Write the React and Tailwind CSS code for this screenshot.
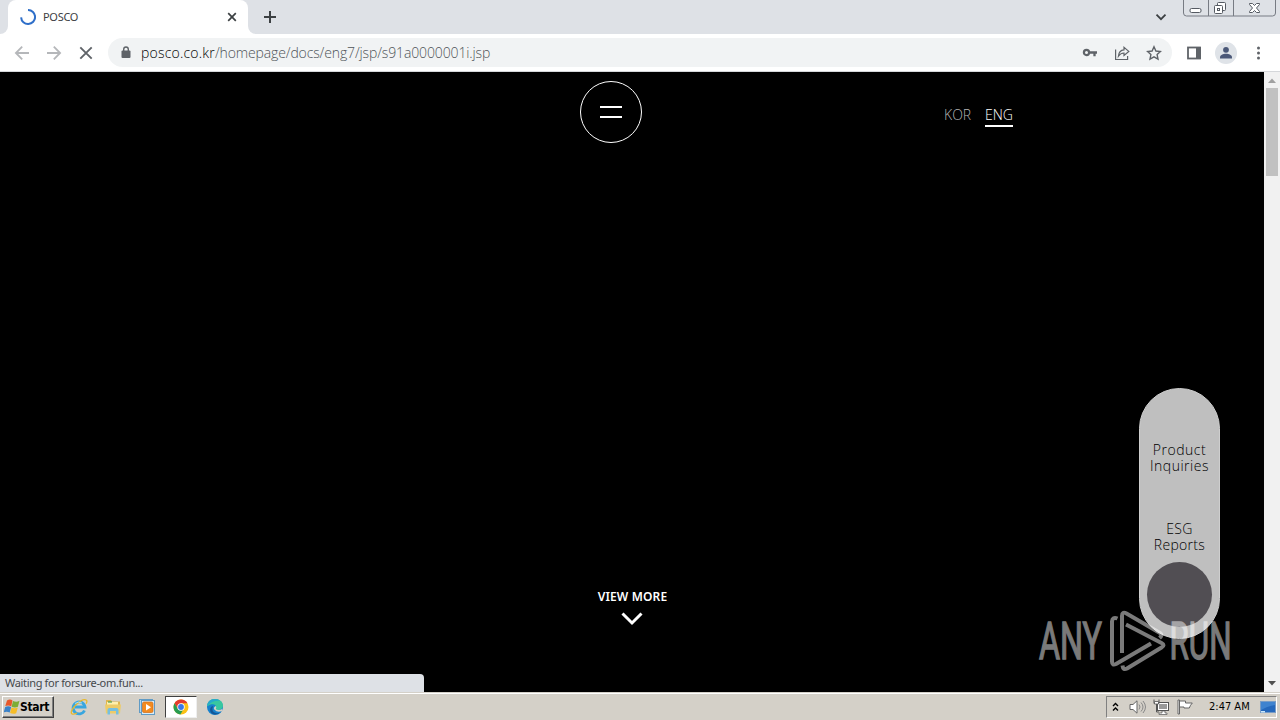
import React from "react";

function TabStrip() {
  return (
    <div className="flex h-[34px] w-full items-start bg-[#dee1e6]">
      <div className="flex h-[34px] w-2 items-end bg-white">
        <div className="h-full w-2 rounded-br-lg bg-[#dee1e6]" />
      </div>
      <div className="flex h-[34px] w-60 items-center rounded-t-lg bg-white pr-2.5 pl-3">
        <svg className="size-4 shrink-0" viewBox="0 0 16 16" fill="none">
          <path d="M8 1A7 7 0 1 1 1.1 8.400" stroke="#2f6fc9" strokeWidth="2" />
        </svg>
        <span className="ml-[7px] flex-1 text-[11px] tracking-[-0.3px] text-[#3c4043]">POSCO</span>
        <svg className="size-3" viewBox="0 0 12 12" stroke="#3c4043" strokeWidth="1.7">
          <path d="M2.2 2.2l7.6 7.6M9.8 2.2L2.2 9.8" />
        </svg>
      </div>
      <div className="h-[34px] w-2 bg-white">
        <div className="h-full w-2 rounded-bl-lg bg-[#dee1e6]" />
      </div>
      <svg className="mt-[10px] ml-[7px] size-[14px]" viewBox="0 0 14 14" stroke="#3c4043" strokeWidth="2">
        <path d="M7 1v12M1 7h12" />
      </svg>
      <svg className="mt-[11px] ml-auto size-3" viewBox="0 0 12 12" fill="none" stroke="#3c4043" strokeWidth="1.8">
        <path d="M1.5 3.7L6 8.2l4.5-4.5" />
      </svg>
      <svg className="ml-4 h-[18px] w-[94px]" viewBox="0 0 94 18" fill="none" stroke="#777b83">
        <path d="M.5 0v13q0 3 3 3h86q3 0 3-3V0M25.5 0v16M50.500 0v16" />
        <rect x="7" y="8.500" width="11" height="4" rx="1.500" fill="#fff" stroke="#555a62" />
        <g stroke="#555a62" fill="#fff">
          <rect x="34.500" y="2.500" width="8" height="8" rx="1" />
          <rect x="31.500" y="5.500" width="8" height="8" rx="1" />
          <rect x="34.500" y="8.500" width="2" height="2" />
        </g>
        <path fill="#fff" stroke="#555a62" d="M66.500 3.500h3l2 2 2-2h3v1l-3 3.500 3 3.500v1h-3l-2-2-2 2h-3v-1l3-3.500-3-3.500z" />
      </svg>
      <div className="w-[3px]" />
    </div>
  );
}

function Toolbar() {
  return (
    <div className="flex h-[38px] w-full items-center border-b border-[#d5d7da] bg-white pl-[14px]">
      <div className="flex w-[94px] items-center gap-4">
        <svg className="size-4" viewBox="0 0 16 16" fill="none" stroke="#b5b7ba" strokeWidth="1.8">
          <path d="M15 8H2M8.200 1.700L1.900 8l6.300 6.300" />
        </svg>
        <svg className="size-4" viewBox="0 0 16 16" fill="none" stroke="#b5b7ba" strokeWidth="1.8">
          <path d="M1 8h13M7.800 1.700L14.100 8l-6.300 6.300" />
        </svg>
        <svg className="size-4" viewBox="0 0 16 16" fill="none" stroke="#5f6368" strokeWidth="1.900">
          <path d="M2.300 2.300l11.400 11.400M13.700 2.300L2.300 13.700" />
        </svg>
      </div>
      <div className="flex h-[29px] w-[1064px] items-center rounded-full bg-[#f1f3f4] pr-[10px] pl-[13px]">
        <svg className="h-[13px] w-[10px]" viewBox="0 0 10 13">
          <rect x="0.500" y="4.500" width="9" height="7.500" rx="1" fill="#5f6368" />
          <path d="M2.700 5V3.300a2.300 2.300 0 0 1 4.600 0V5" fill="none" stroke="#5f6368" strokeWidth="1.400" />
        </svg>
        <div className="ml-[10px] flex-1 text-[14px] leading-5 font-light tracking-[-0.13px] whitespace-nowrap text-[#4f5358] [font-family:'Open_Sans','Noto_Sans',sans-serif]">
          <span className="tracking-[0.2px] text-black">posco.co.kr</span>/homepage/docs/eng7/jsp/s91a0000001i.jsp
        </div>
        <div className="flex items-center gap-4">
          <svg className="size-4" viewBox="0 0 16 16" fill="none" stroke="#5f6368">
            <circle cx="4.500" cy="7.500" r="2.600" strokeWidth="2.200" />
            <path d="M7 7.500h8M12.500 7.500v3.700" strokeWidth="2.300" />
          </svg>
          <svg className="size-4" viewBox="0 0 16 16" fill="none" stroke="#5f6368" strokeWidth="1.200">
            <path d="M1.600 4.500v10h12V11" />
            <path d="M4.400 11.200C4.700 7.300 6.700 5.200 10 4.900V2.200l4.800 4.200L10 10.500V8C7.500 8.100 5.800 9.100 4.400 11.200z" />
          </svg>
          <svg className="size-4" viewBox="0 0 16 16" fill="none" stroke="#5f6368" strokeWidth="1.400">
            <path d="M8 1.800l1.900 4.200 4.500.5-3.300 3.100.9 4.500L8 11.800l-4 2.300.9-4.500L1.600 6.500l4.500-.5z" />
          </svg>
        </div>
      </div>
      <svg className="ml-[14px] size-4" viewBox="0 0 16 16">
        <rect x="2" y="2.500" width="12" height="11" fill="none" stroke="#5f6368" strokeWidth="1.800" />
        <rect x="10" y="2" width="5" height="12" fill="#5f6368" />
      </svg>
      <svg className="ml-[13px] size-[22px]" viewBox="0 0 22 22">
        <circle cx="11" cy="11" r="11" fill="#dfe3e8" />
        <circle cx="11" cy="7.800" r="2.900" fill="#4b5878" />
        <path d="M5 16.500v-1.300c0-2 3-3.400 6-3.400s6 1.400 6 3.400v1.300z" fill="#4b5878" />
      </svg>
      <svg className="ml-[18px] h-4 w-[7px]" viewBox="0 0 7 16" fill="#5f6368">
        <circle cx="3.500" cy="3" r="1.500" />
        <circle cx="3.500" cy="8" r="1.500" />
        <circle cx="3.500" cy="13" r="1.500" />
      </svg>
    </div>
  );
}

function Watermark() {
  return (
    <svg className="absolute top-[532px] left-[1034px] h-[72px] w-[202px]" viewBox="0 0 202 72">
      <g fill="#fff" stroke="#fff" strokeWidth="1.3" opacity="0.48" fontFamily="Roboto, 'Liberation Sans', sans-serif" fontSize="51">
        <text x="5" y="55" textLength="63" lengthAdjust="spacingAndGlyphs">ANY</text>
        <text x="135.500" y="55" textLength="62" lengthAdjust="spacingAndGlyphs">RUN</text>
      </g>
      <g fill="none" stroke="#fff" opacity="0.48" strokeWidth="4" strokeLinejoin="round">
        <path d="M83.500 14.500q-5-2-5.500 3v40q0 4.500 4 2.500l35-20.500" />
        <path d="M88 49V12q0-5 4.500-2.500L126 29q3 2-.5 5" />
        <path d="M92 20.500l35.500 18.500q4 2 0 4.500L93 64.500q-4 2-4.500-3" />
      </g>
    </svg>
  );
}

function PageView() {
  return (
    <div className="flex h-[620px] w-full">
      <main className="relative flex w-[1264px] flex-col items-center bg-black">
        <header className="mt-[9px] grid h-[62px] w-full grid-cols-[580px_62px_1fr]">
          <div />
          <button className="flex size-[62px] flex-col items-center justify-center gap-2 rounded-full border border-white">
            <span className="h-0.5 w-[22px] bg-white" />
            <span className="h-0.5 w-[22px] bg-white" />
          </button>
          <nav className="mt-6 ml-[302px] flex items-start gap-[13px] text-[14px] leading-[19px] font-light [font-family:'Open_Sans','Noto_Sans',sans-serif]">
            <span className="w-7 whitespace-nowrap text-[#b5b5b5]">KOR</span>
            <span className="h-[22px] w-7 border-b-2 border-white whitespace-nowrap text-white">ENG</span>
          </nav>
        </header>
        <div className="mt-auto mb-[66px] flex flex-col items-center text-white">
          <span className="ml-px text-[12px] leading-4 font-semibold tracking-[0.15px]">VIEW MORE</span>
          <svg className="mt-[7px] h-[14px] w-[22px]" viewBox="0 0 22 14" fill="none" stroke="white" strokeWidth="3">
            <path d="M1.500 1.500l9.500 9.500 9.500-9.500" />
          </svg>
        </div>
        <aside className="absolute top-[316px] left-[1139px] flex h-[251px] w-[81px] flex-col items-center rounded-full border border-[#cecece] bg-[#bfbfbf] text-center text-[14px] leading-4 font-light tracking-[0.5px] text-black [font-family:'Open_Sans','Noto_Sans',sans-serif]">
          <div className="mt-[53px]">Product<br />Inquiries</div>
          <div className="mt-[47px] tracking-[0.3px]">ESG<br />Reports</div>
          <div className="mt-[9px] size-[65px] rounded-full bg-[#514e53]" />
        </aside>
        <Watermark />
        <div className="absolute bottom-0 left-0 flex h-[18px] w-[424px] items-center rounded-tr bg-[#dee1e6] pl-[5px] text-[11px] text-[#45484b]">
          <span className="tracking-[-0.33px]">Waiting for forsure-om.fun...</span>
        </div>
      </main>
      <div className="flex w-4 flex-col items-center bg-[#f1f1f1]">
        <svg className="h-4 w-4" viewBox="0 0 16 16"><path d="M4 11l4-4.500 4 4.500z" fill="#a0a0a0" /></svg>
        <div className="h-[88px] w-3 bg-[#c1c1c1]" />
        <svg className="mt-auto h-4 w-4" viewBox="0 0 16 16"><path d="M4 5l4 4.500L12 5z" fill="#505050" /></svg>
      </div>
    </div>
  );
}

function Taskbar() {
  return (
    <div className="flex h-7 w-full items-start border-t border-[#d4d0c8] bg-[#d4d0c8]">
      <div className="flex h-[27px] w-full border-t border-white">
        <div className="mt-[2px] ml-[2px] flex h-[22px] w-[52px] items-center border-t border-r border-b border-l border-t-white border-r-[#404040] border-b-[#404040] border-l-white pl-px shadow-[inset_-1px_-1px_#808080]">
          <svg className="size-4 shrink-0" viewBox="0 0 16 16">
            <path d="M3 1.500q3-1.800 5.500 0L7.300 7.300q-3-1.500-6-.2z" fill="#e8582a" />
            <path d="M9 2q3.500 1.500 6.500-.2l-1.600 6q-3 1.400-6.300-.1z" fill="#7dad35" />
            <path d="M1.200 8q3-1.400 6 0l-1.500 5.500q-3-1.500-6-.2z" fill="#3b82c8" />
            <path d="M7.500 8.500q3.300 1.500 6.300.1l-1.600 5.600q-3 1.300-6.100-.2z" fill="#f6bd28" />
          </svg>
          <span className="text-[12px] font-bold tracking-[-0.35px] text-black [font-family:'DejaVu_Sans_Condensed','DejaVu_Sans',sans-serif] [font-stretch:condensed]">Start</span>
        </div>
        <div className="mt-px ml-4 flex h-6 items-center">
          <svg className="size-[18px]" viewBox="0 0 18 18" fill="none">
            <path d="M14.500 12.500A6 6 0 1 1 15 9H5" stroke="#38a6df" strokeWidth="2.800" />
            <path d="M2 16C-2 13 12-1 16.500 2.200q1 1-.4 3.500M2 16q2 .6 5-1" stroke="#e7b92e" strokeWidth="1.300" />
            <path d="M5 5.500Q8 3 12 5" stroke="#a7def5" />
          </svg>
          <svg className="ml-4 size-[18px]" viewBox="0 0 18 18">
            <path d="M2 2h5l1 1.500h8v8H2z" fill="#dfb64e" />
            <path d="M3 4h11v7H3z" fill="#fff0ad" />
            <path d="M1 6.500h16l-1 9H2z" fill="#edcb68" />
            <path d="M3.500 16.500v-4.500q0-2 2-2h7q2 0 2 2v4.500h-2.500v-3.500H6v3.500z" fill="#75bfe0" />
            <path d="M4 4h4" stroke="#51a25b" strokeWidth="1.200" />
          </svg>
          <svg className="ml-4 size-[18px]" viewBox="0 0 18 18">
            <rect x="1.500" y="1.500" width="13" height="13" fill="#b4d8ef" stroke="#609bc5" />
            <rect x="3.500" y="2.500" width="13" height="14" fill="#d9edf8" stroke="#609bc5" />
            <rect x="4.500" y="4" width="10.500" height="10.500" rx="1.500" fill="#f28b20" stroke="#d36a14" strokeWidth=".7" />
            <path d="M8 6v6.500l5-3.250z" fill="white" />
          </svg>
          <div className="ml-[9px] flex h-[22px] w-8 items-center justify-center border border-t-[#404040] border-r-[#eee] border-b-[#eee] border-l-[#404040] bg-white">
            <svg className="size-4" viewBox="0 0 16 16">
              <circle cx="8" cy="8" r="7.500" fill="#fbc116" />
              <path d="M8 8L4.800 9.800 1.500 4.250A7.500 7.500 0 0 1 14.500 4.250H8z" fill="#e33b2e" />
              <path d="M1.500 4.250L4.800 9.800 8 11.600l2-.6-2.600 4.500A7.500 7.500 0 0 1 1.500 4.250z" fill="#279c51" />
              <circle cx="8" cy="8" r="3.700" fill="white" />
              <circle cx="8" cy="8" r="2.900" fill="#3978e7" />
            </svg>
          </div>
          <svg className="ml-[9px] size-[18px]" viewBox="0 0 18 18">
            <circle cx="9" cy="9" r="8" fill="#1681cd" />
            <path d="M1 8Q2 1 9 1c5 0 8 3 8 6.500 0 3-2.500 4.500-6 4.500q-2 0-1-2c1-4-5-5-8-2z" fill="#38c7a0" />
            <path d="M1 8Q2 1 9 1q3 0 5 2Q7 2 1 8z" fill="#26a9cc" />
            <path d="M7 8q-2 6 3 7 3 .6 5.500-1.500Q12 17 8 16.500C3 15 3 9 7 8z" fill="#145797" />
            <path d="M9.800 8q1 1 0 3 2 2 6.500 0v2q-5 2-8-1.500-1.500-2 1.500-3.500z" fill="#d4d0c8" />
          </svg>
        </div>
        <div className="mt-[2px] mr-[3px] ml-auto flex h-[22px] w-[171px] items-center border border-t-[#808080] border-r-white border-b-white border-l-[#808080] pl-[5px]">
          <svg className="h-[10px] w-[7px]" viewBox="0 0 7 10" fill="none" stroke="black" strokeWidth="1.400">
            <path d="M1 4l2.500-2.500L6 4M1 8.500L3.500 6 6 8.500" />
          </svg>
          <svg className="ml-[10px] h-4 w-[17px]" viewBox="0 0 17 16" fill="none" stroke="#666">
            <path d="M1 5.500h3L8 1.800v12.400l-4-3.700H1z" fill="white" />
            <path d="M10 5.500q2 2.500 0 5M12 3.500q4 4.500 0 9M14 2q5 6 0 12" stroke="#888" />
          </svg>
          <svg className="ml-[7px] h-4 w-4" viewBox="0 0 16 16">
            <rect x="4.500" y="3.500" width="11" height="8" fill="#999" stroke="#555" />
            <rect x="5.500" y="4.500" width="9" height="6" fill="none" stroke="white" />
            <path d="M9 12h3v2h2v1.500H6V14h3z" fill="white" stroke="#555" strokeWidth=".7" />
            <path d="M1 .5v4h5v-4M3.500 4.500V13H6" fill="none" stroke="#555" />
            <path d="M1.500 2.500h4V5h-4z" fill="white" stroke="#555" strokeWidth=".8" />
          </svg>
          <svg className="ml-2 h-4 w-4" viewBox="0 0 16 16" fill="white" stroke="#666">
            <path d="M1 1h1.500v14H1z" />
            <path d="M2.500 2h6v2h6.800q-2 2-3 5H7V8H2.500z" />
          </svg>
          <span className="ml-4 text-[11px] whitespace-nowrap text-black [font-family:'DejaVu_Sans_Condensed','DejaVu_Sans',sans-serif] [font-stretch:condensed]">2:47 AM</span>
          <svg className="mr-0 ml-auto h-[14px] w-4 shrink-0" viewBox="0 0 16 14">
            <rect x=".5" y="1.500" width="15" height="11" fill="#2568bc" stroke="#789cc6" />
            <path d="M1 2h14v3Q8 6 1 10z" fill="#3f83cf" />
            <path d="M1 11h4v1.500H1z" fill="#c9e7fa" />
          </svg>
        </div>
      </div>
    </div>
  );
}

export default function App() {
  return (
    <div className="flex h-[720px] w-[1280px] flex-col overflow-hidden [font-family:'Noto_Sans','Open_Sans',sans-serif]">
      <TabStrip />
      <Toolbar />
      <PageView />
      <Taskbar />
    </div>
  );
}
